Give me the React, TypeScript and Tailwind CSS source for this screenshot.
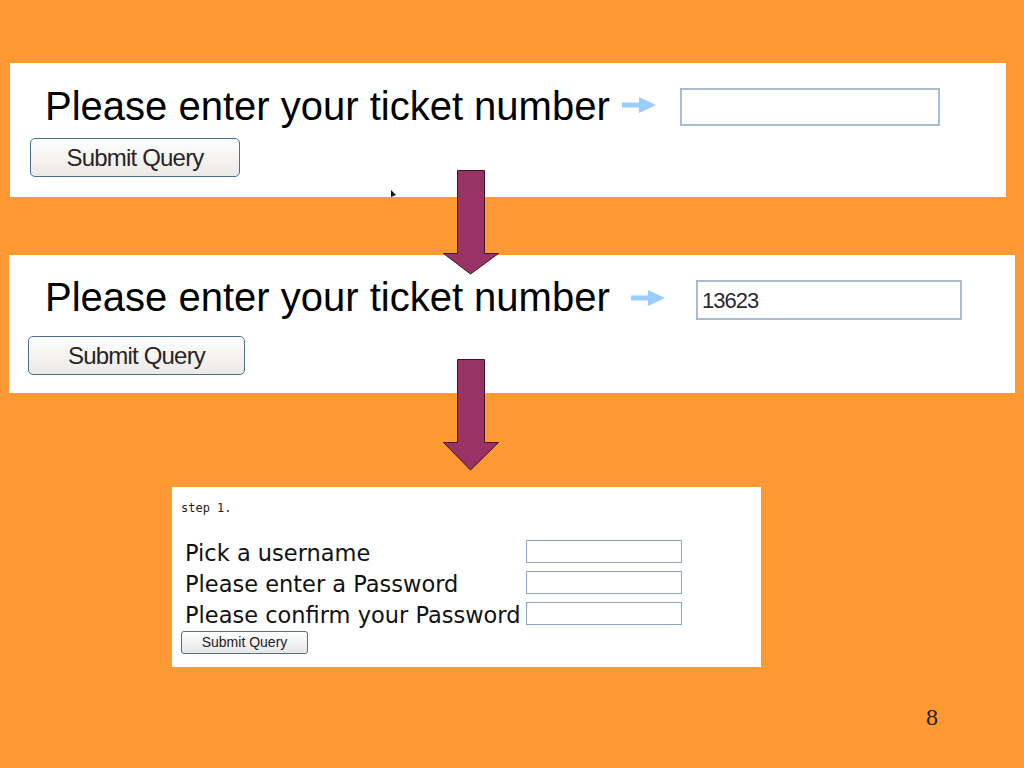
import React from "react";

function BlueArrow() {
  return (
    <svg width="34" height="16" viewBox="0 0 34 16" className="shrink-0">
      <rect x="0" y="5.5" width="20" height="5" fill="#99ccff" />
      <polygon points="17,0 34,8 17,16" fill="#99ccff" />
    </svg>
  );
}

function DownArrow({ top, head }: { top: string; head: number }) {
  const tip = 84 + head;
  return (
    <svg width="58" height={tip + 2} viewBox={`0 0 58 ${tip + 2}`} className={`absolute left-[442px] ${top}`}>
      <polygon
        points={`15.5,0.5 42.5,0.5 42.5,83.5 56.5,83.5 28.5,${tip} 1.5,83.5 15.5,83.5`}
        fill="#993366"
        stroke="#3d1628"
        strokeWidth="1"
      />
    </svg>
  );
}

function BigButton({ className }: { className: string }) {
  return (
    <button
      className={`flex items-center justify-center rounded-[5px] border border-[#4d6f8f] bg-gradient-to-b from-white to-[#ebe9e6] font-['Liberation_Sans',Arial,sans-serif] text-[24px] tracking-[-0.8px] text-[#2a2424] ${className}`}
    >
      Submit Query
    </button>
  );
}

export default function App() {
  return (
    <div className="relative flex h-[768px] w-full flex-col overflow-hidden bg-[#fe9934] font-['Liberation_Sans',Arial,sans-serif] text-black">
      {/* slide 1: empty ticket */}
      <div className="ml-[10px] mt-[63px] h-[134px] w-[996px] shrink-0 bg-white pt-[24px]">
        <div className="flex items-start">
          <span className="ml-[35px] h-[39px] w-[577px] shrink-0 text-[40px] leading-[39px] whitespace-nowrap">
            Please enter your ticket number
          </span>
          <div className="mt-[10px]">
            <BlueArrow />
          </div>
          <div className="ml-[24px] mt-[1px] h-[38px] w-[260px] border-2 border-[#a9bdd2] bg-white" />
        </div>
        <BigButton className="ml-[20px] mt-[12px] h-[39px] w-[210px]" />
      </div>

      {/* slide 2: filled ticket */}
      <div className="ml-[9px] mt-[58px] h-[138px] w-[1006px] shrink-0 bg-white pt-[23px]">
        <div className="flex items-start">
          <span className="ml-[36px] h-[39px] w-[586px] shrink-0 text-[40px] leading-[39px] whitespace-nowrap">
            Please enter your ticket number
          </span>
          <div className="mt-[12px]">
            <BlueArrow />
          </div>
          <div className="ml-[31px] mt-[2px] flex h-[40px] w-[266px] items-center border-2 border-[#a9bdd2] bg-white pl-[4px] text-[22px] tracking-[-1px] text-[#2b2b2b]">
            13623
          </div>
        </div>
        <BigButton className="ml-[19px] mt-[16px] h-[39px] w-[217px]" />
      </div>

      {/* registration step */}
      <div className="ml-[172px] mt-[94px] h-[180px] w-[589px] shrink-0 bg-white pl-[9px] pt-[13px]">
        <div className="font-['DejaVu_Sans_Mono',monospace] text-[12px] leading-[16px] text-[#222]">step 1.</div>
        <div className="mt-[22px] grid grid-cols-[345px_156px] font-['DejaVu_Sans',Verdana,sans-serif] text-[22.5px] leading-[31px] text-[#111]">
          {["Pick a username", "Please enter a Password", "Please confirm your Password"].map((label) => (
            <React.Fragment key={label}>
              <span className="pl-[4px] whitespace-nowrap">{label}</span>
              <div className="mt-[2px] h-[23px] w-[156px] border border-[#8ea3ba] bg-white" />
            </React.Fragment>
          ))}
        </div>
        <button className="flex h-[23px] w-[127px] items-center justify-center rounded-[3px] border border-[#5a6e84] bg-gradient-to-b from-white to-[#e6e6e6] font-['Liberation_Sans',Arial,sans-serif] text-[14px] text-[#222]">
          Submit Query
        </button>
      </div>

      <div className="ml-[926px] mt-[38px] font-['Liberation_Serif','Times_New_Roman',serif] text-[24px] leading-none text-[#222]">
        8
      </div>

      {/* cursor mark */}
      <svg width="6" height="8" viewBox="0 0 6 8" className="absolute left-[391px] top-[190px]">
        <polygon points="0,0 5,5 0,7" fill="#111" />
      </svg>

      <DownArrow top="top-[170px]" head={20} />
      <DownArrow top="top-[359px]" head={27} />
    </div>
  );
}
